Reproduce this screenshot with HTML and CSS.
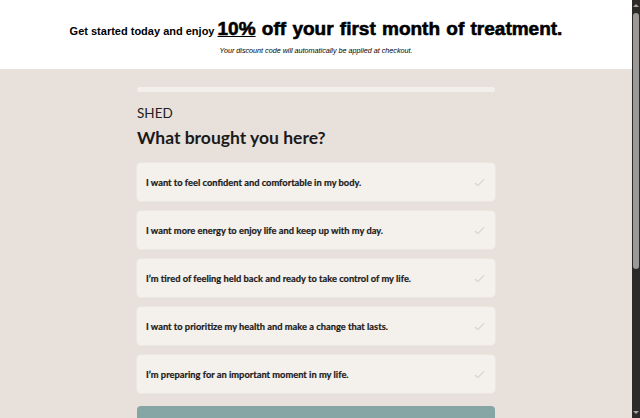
FILE: index.html
```html
<!DOCTYPE html>
<html lang="en">
<head>
<meta charset="utf-8">
<link rel="stylesheet" href="styles.css">
</head>
<body>
<header class="promo">
  <p class="promo-title">Get started today and enjoy <span class="big"><u>10%</u> off your first month of treatment.</span></p>
  <p class="promo-sub">Your discount code will automatically be applied at checkout.</p>
</header>
<main class="quiz">
  <div class="progress"></div>
  <div class="brand">SHED</div>
  <h1 class="question">What brought you here?</h1>
  <div class="options">
    <div class="option"><span>I want to feel confident and comfortable in my body.</span><svg class="check" viewBox="0 0 12 10" width="11" height="9"><path d="M1 5.5 L4.2 8.5 L11 1.5" fill="none" stroke="#d9d4ce" stroke-width="1.4"/></svg></div>
    <div class="option"><span>I want more energy to enjoy life and keep up with my day.</span><svg class="check" viewBox="0 0 12 10" width="11" height="9"><path d="M1 5.5 L4.2 8.5 L11 1.5" fill="none" stroke="#d9d4ce" stroke-width="1.4"/></svg></div>
    <div class="option"><span>I’m tired of feeling held back and ready to take control of my life.</span><svg class="check" viewBox="0 0 12 10" width="11" height="9"><path d="M1 5.5 L4.2 8.5 L11 1.5" fill="none" stroke="#d9d4ce" stroke-width="1.4"/></svg></div>
    <div class="option"><span>I want to prioritize my health and make a change that lasts.</span><svg class="check" viewBox="0 0 12 10" width="11" height="9"><path d="M1 5.5 L4.2 8.5 L11 1.5" fill="none" stroke="#d9d4ce" stroke-width="1.4"/></svg></div>
    <div class="option"><span>I’m preparing for an important moment in my life.</span><svg class="check" viewBox="0 0 12 10" width="11" height="9"><path d="M1 5.5 L4.2 8.5 L11 1.5" fill="none" stroke="#d9d4ce" stroke-width="1.4"/></svg></div>
  </div>
  <button class="continue" type="button" aria-label="Continue"></button>
</main>
<div class="scrollbar" aria-hidden="true">
  <div class="sb-arrow up"></div>
  <div class="sb-thumb"></div>
  <div class="sb-fill"></div>
  <div class="sb-arrow down"></div>
</div>
</body>
</html>
```
FILE: styles.css
```css
html { background: #e8e0da; }
body {
  margin: 0 8px 0 0;
  font-family: Lato, "Noto Sans", sans-serif;
  color: #1c1c1c;
  background: #e8e0da;
}
.promo {
  background: #fff;
  height: 69px;
  padding-top: 18px;
  box-sizing: border-box;
  text-align: center;
  font-family: "Liberation Sans", Arial, sans-serif;
  color: #000;
}
.promo-title {
  margin: 0;
  font-size: 11px;
  font-weight: bold;
  line-height: 22px;
}
.promo-title .big {
  font-size: 19px;
  font-weight: 900;
  word-spacing: 1px;
  -webkit-text-stroke: 0.6px #000;
}
.promo-sub {
  margin: 4px 0 0;
  font-size: 7.2px;
  font-style: italic;
  line-height: 10px;
}
.quiz {
  width: 358px;
  margin: 0 auto;
  padding: 18px 0 40px;
}
.progress {
  height: 5px;
  background: #f3efeb;
  border-radius: 3px;
}
.brand {
  margin-top: 11px;
  font-size: 13.5px;
  line-height: 20px;
  font-weight: 400;
  color: #222;
}
.question {
  margin: 3px 0 0;
  font-size: 17.5px;
  line-height: 24px;
  font-weight: 700;
  color: #1a1a1a;
}
.options {
  margin-top: 13px;
  display: flex;
  flex-direction: column;
  gap: 10px;
}
.option {
  height: 38px;
  box-sizing: border-box;
  background: #f4f0ec;
  border-radius: 4px;
  box-shadow: 0 0 0 1px #ece6e0;
  display: flex;
  align-items: center;
  justify-content: space-between;
  padding: 0 10px 0 9px;
  font-size: 9.3px;
  font-weight: 700;
  color: #1a1a1a;
  -webkit-text-stroke: 0.2px #1a1a1a;
}
.continue {
  display: block;
  width: 100%;
  height: 52px;
  margin-top: 13px;
  border: 0;
  border-radius: 4px;
  background: #86a5a5;
}
.scrollbar {
  position: fixed;
  top: 0;
  right: 0;
  width: 8px;
  height: 100%;
  background: #2b2a29;
  display: flex;
  flex-direction: column;
  align-items: center;
}
.sb-arrow {
  width: 0;
  height: 0;
  border-left: 3px solid transparent;
  border-right: 3px solid transparent;
  margin: 4px 0;
}
.sb-arrow.up { border-bottom: 3px solid #a8a6a4; }
.sb-arrow.down { border-top: 3px solid #a8a6a4; }
.sb-thumb {
  width: 6px;
  height: 256px;
  margin-top: 2px;
  background: #9c9a98;
  border-radius: 3px;
}
.sb-fill { flex: 1; }
```
